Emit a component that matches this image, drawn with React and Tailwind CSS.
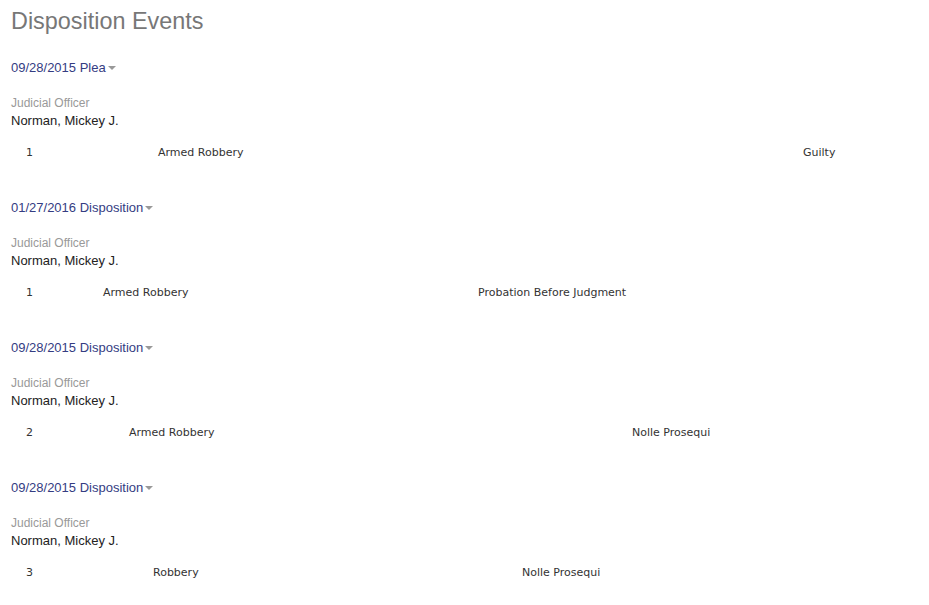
const events = [
  {
    title: '09/28/2015 Plea',
    cols: 'grid-cols-[132px_645px_auto]',
    row: ['1', 'Armed Robbery', 'Guilty']
  },
  {
    title: '01/27/2016 Disposition',
    cols: 'grid-cols-[77px_375px_auto]',
    row: ['1', 'Armed Robbery', 'Probation Before Judgment']
  },
  {
    title: '09/28/2015 Disposition',
    cols: 'grid-cols-[103px_503px_auto]',
    row: ['2', 'Armed Robbery', 'Nolle Prosequi']
  },
  {
    title: '09/28/2015 Disposition',
    cols: 'grid-cols-[127px_369px_auto]',
    row: ['3', 'Robbery', 'Nolle Prosequi']
  }
];

const Caret = () => (
  <span className="ml-[2px] inline-block h-0 w-0 border-x-[4px] border-t-[4px] border-x-transparent border-t-[#999] align-middle" />
);

const EventBlock = ({ event }) => (
  <div className="h-[140px]">
    <div className="flex h-[20px] items-center text-[13px] text-[#343c82]">
      {event.title}
      <Caret />
    </div>
    <div className="mt-[16px] h-[18px] text-[12px] leading-[18px] text-[#999]">Judicial Officer</div>
    <div className="h-[18px] text-[13px] leading-[18px] text-[#222]">Norman, Mickey J.</div>
    <div
      className={`mt-[15px] grid ${event.cols} pl-[15px] font-['DejaVu_Sans','Verdana',sans-serif] text-[11px] leading-[16px] text-[#333]`}
    >
      {event.row.map((cell, i) => (
        <span key={i}>{cell}</span>
      ))}
    </div>
  </div>
);

export default function App() {
  return (
    <div className="min-h-[605px] bg-white px-[11px] pt-[8px] font-['Liberation_Sans',Arial,sans-serif]">
      <h1 className="h-[26px] text-[23.4px] leading-[26px] text-[#777]">Disposition Events</h1>
      <div className="mt-[24px]">
        {events.map((event, i) => (
          <EventBlock key={i} event={event} />
        ))}
      </div>
    </div>
  );
}
